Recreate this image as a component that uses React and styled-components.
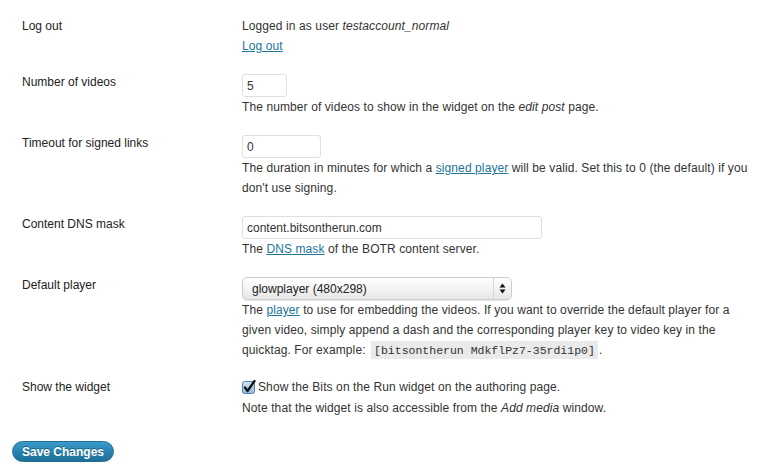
import React from 'react'
import styled, { createGlobalStyle } from 'styled-components'

const GlobalStyle = createGlobalStyle`
  body {
    margin: 0;
    background: #fff;
    font-family: "Liberation Sans", Arial, sans-serif;
    font-size: 12px;
    color: #333;
  }
`

const Form = styled.form`
  padding: 8px 0 0 12px;
`

const Table = styled.div`
  padding-left: 10px;
`

const Row = styled.div`
  display: grid;
  grid-template-columns: 220px 1fr;
  padding: 8px 0;
  line-height: 20px;
`

const Label = styled.div`
  color: #222;
`

const Field = styled.div`
  display: flex;
  flex-direction: column;
  align-items: flex-start;
  letter-spacing: 0.1px;
`

const Line = styled.div`
  line-height: ${p => p.$lh || 20}px;
  max-width: ${p => (p.$maxW ? `${p.$maxW}px` : 'none')};
`

const Link = styled.a`
  color: #21759b;
  text-decoration: underline;
  cursor: pointer;
`

const TextInput = styled.input`
  box-sizing: border-box;
  width: ${p => p.$w}px;
  height: 23px;
  margin-top: 2px;
  padding: 0 4px;
  border: 1px solid #dfdfdf;
  border-radius: 3px;
  font: 12px "Liberation Sans", Arial, sans-serif;
  color: #333;
  background: #fff;
  outline: none;
`

const SelectBox = styled.div`
  box-sizing: border-box;
  display: flex;
  width: 270px;
  height: 23px;
  margin-top: 2px;
  border: 1px solid #cdcdcd;
  border-radius: 5px;
  background: linear-gradient(#ffffff, #f4f4f4 50%, #e6e6e6);
  box-shadow: 0 1px 1px rgba(0, 0, 0, 0.1);
`

const NativeSelect = styled.select`
  flex: 1;
  appearance: none;
  border: none;
  background: transparent;
  padding: 0 0 0 9px;
  font: 12px "Liberation Sans", Arial, sans-serif;
  color: #222;
  outline: none;
`

const Arrows = styled.span`
  width: 17px;
  display: flex;
  align-items: center;
  justify-content: center;
  border-left: 1px solid #d8d8d8;
`

const Code = styled.code`
  font-family: "Liberation Mono", "DejaVu Sans Mono", monospace;
  font-size: 11.5px;
  letter-spacing: 0;
  background: #eaeaea;
  padding: 3px 3px 2px;
  margin: 0 1px 0 2px;
`

const CheckLine = styled.label`
  display: flex;
  align-items: center;
  gap: 2px;
  height: 20px;
`

const SaveButton = styled.button`
  margin-top: 14px;
  height: 21px;
  padding: 0 9px;
  border: 1px solid #1f6f94;
  border-radius: 11px;
  background: linear-gradient(#3a9ccb, #2581ad 55%, #1f6f98);
  color: #fff;
  font: bold 12px "Liberation Sans", Arial, sans-serif;
  text-shadow: 0 -1px 0 rgba(0, 0, 0, 0.35);
  cursor: pointer;
`

const SelectArrows = () => (
  <svg width="7" height="11" viewBox="0 0 7 11">
    <path d="M3.5 0.5 L6.5 4.5 H0.5 Z" fill="#111" />
    <path d="M3.5 10.5 L6.5 6.5 H0.5 Z" fill="#111" />
  </svg>
)

const CheckIcon = () => (
  <svg width="14" height="14" viewBox="0 0 14 14">
    <defs>
      <linearGradient id="cbg" x1="0" y1="0" x2="0" y2="1">
        <stop offset="0" stopColor="#d6e6f7" />
        <stop offset="1" stopColor="#8fb6e0" />
      </linearGradient>
    </defs>
    <rect x="0.5" y="1.5" width="12" height="12" rx="2" fill="url(#cbg)" stroke="#5a7fa8" />
    <path d="M3 7.5 L5.5 11 L12.5 1" fill="none" stroke="#111" strokeWidth="2.2" strokeLinecap="round" strokeLinejoin="round" />
  </svg>
)

export default function App() {
  return (
    <>
      <GlobalStyle />
      <Form onSubmit={e => e.preventDefault()}>
        <Table>
          <Row>
            <Label>Log out</Label>
            <Field>
              <Line>Logged in as user <i>testaccount_normal</i></Line>
              <Line><Link>Log out</Link></Line>
            </Field>
          </Row>
          <Row>
            <Label>Number of videos</Label>
            <Field>
              <TextInput $w={45} defaultValue="5" />
              <Line>The number of videos to show in the widget on the <i>edit post</i> page.</Line>
            </Field>
          </Row>
          <Row>
            <Label>Timeout for signed links</Label>
            <Field>
              <TextInput $w={79} defaultValue="0" />
              <Line>
                The duration in minutes for which a <Link>signed player</Link> will be valid. Set this to 0 (the default) if you don't use signing.
              </Line>
            </Field>
          </Row>
          <Row>
            <Label>Content DNS mask</Label>
            <Field>
              <TextInput $w={300} defaultValue="content.bitsontherun.com" />
              <Line>The <Link>DNS mask</Link> of the BOTR content server.</Line>
            </Field>
          </Row>
          <Row>
            <Label>Default player</Label>
            <Field>
              <SelectBox>
                <NativeSelect defaultValue="glow">
                  <option value="glow">glowplayer (480x298)</option>
                </NativeSelect>
                <Arrows><SelectArrows /></Arrows>
              </SelectBox>
              <Line $maxW={490}>
                The <Link>player</Link> to use for embedding the videos. If you want to override the default player for a given video, simply append a dash and the corresponding player key to video key in the quicktag. For example: <Code>[bitsontherun MdkflPz7-35rdi1p0]</Code>.
              </Line>
            </Field>
          </Row>
          <Row>
            <Label>Show the widget</Label>
            <Field>
              <CheckLine>
                <CheckIcon />
                Show the Bits on the Run widget on the authoring page.
              </CheckLine>
              <Line $lh={22}>Note that the widget is also accessible from the <i>Add media</i> window.</Line>
            </Field>
          </Row>
        </Table>
        <SaveButton type="submit">Save Changes</SaveButton>
      </Form>
    </>
  )
}
